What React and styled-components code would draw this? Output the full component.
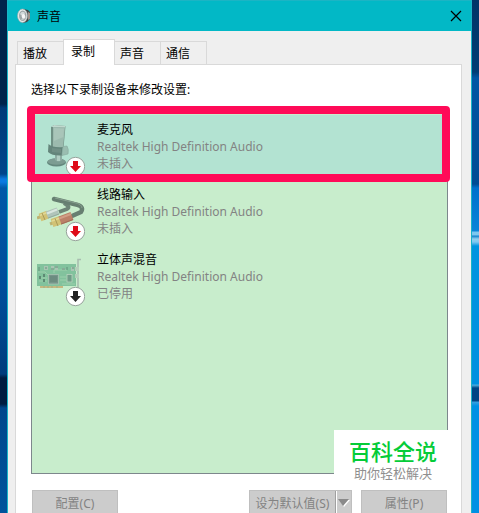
import React, { useState } from 'react'
import styled, { createGlobalStyle } from 'styled-components';

const GlobalStyle = createGlobalStyle`
    * {
        box-sizing: border-box;
    }
    body {
        margin: 0;
        overflow: hidden;
        font-family: 'Noto Sans', 'Noto Sans CJK SC', sans-serif;
        font-size: 12px;
        line-height: 17px;
        color: #000;
    }
    button {
        font: inherit;
        color: inherit;
    }
`;

const Desktop = styled.div`
    display: flex;
    height: 100vh;
    padding: 0 7px;
    overflow: hidden;
    background:
        linear-gradient(#00244c 0 104px, #003a78 108px, #00468c 174px, #0a7ae0 179px, #0a7ae0 182px, #0059a8 188px, #004c98 300px, #003c7c 374px, #001c40 378px, #001c40 404px, #00468c 408px, #00549c 100%) left / 7px 100% no-repeat,
        linear-gradient(#003468 0, #003c74 72px, #0055a4 78px, #004c94 184px, #0070cc 188px, #0a84d8 231px, #7cc8f0 232px, #7cc8f0 235px, #1080cc 236px, #90d0f0 239px, #80c8f0 242px, #0094e0 246px, #0090e0 384px, #50b0e0 385px, #004484 388px, #004484 401px, #3aa0e0 402px, #0090e4 406px, #0090e4 100%) right / 8px 100% no-repeat;
`;

const Dialog = styled.main`
    flex: 1;
    min-height: 100%;
    display: flex;
    flex-direction: column;
    border: 1px solid #18b4c8;
    border-top-color: #1cb4c4;
    border-bottom: 0;
    background: #efefef;
`;

const TitleBar = styled.header`
    display: flex;
    align-items: center;
    height: 30px;
    flex-shrink: 0;
    padding: 0 9px;
    background: #02b8c6;
`;

const Title = styled.h1`
    flex: 1;
    margin: 0 0 0 5px;
    font-size: 12px;
    font-weight: 400;
`;

const CloseButton = styled.button`
    display: flex;
    padding: 0;
    border: 0;
    background: none;
`;

const TabList = styled.div`
    display: flex;
    align-items: flex-end;
    height: 33px;
    flex-shrink: 0;
    padding: 0 9px;
`;

const Tab = styled.button`
    height: ${(props) => (props.$active ? '26px' : '23px')};
    width: ${(props) => (props.$active ? '52px' : '47px')};
    margin: ${(props) => (props.$active ? '0 0 -1px -1px' : '0 0 0 -1px')};
    padding: ${(props) => (props.$active ? '0 10px 2px 7px' : '0 5px')};
    text-align: left;
    border: 1px solid #d9d9d9;
    border-bottom: 0;
    background: ${(props) => (props.$active ? '#fff' : '#efefef')};
    z-index: ${(props) => (props.$active ? 1 : 0)};

    &:first-child {
        margin-left: 0;
    }
`;

const Page = styled.section`
    flex: 1 0 auto;
    margin: 0 9px 0 7px;
    padding: 16px 13px 0 15px;
    border: 1px solid #d9d9d9;
    background: #fff;
`;

const Hint = styled.p`
    margin: 0 0 15px;
`;

const DeviceArea = styled.div`
    position: relative;
`;

const DeviceList = styled.ul`
    height: 361px;
    margin: 0;
    padding: 1px 0 0;
    list-style: none;
    border: 1px solid #7d878c;
    background: #c8edcc;
`;

const DeviceRow = styled.li`
    position: relative;
    display: flex;
    gap: 12px;
    height: 65px;
    padding: 6px 5px;
    background: ${(props) => (props.$selected ? '#b3e3d2' : 'transparent')};
`;

const Marker = styled.span`
    position: absolute;
    inset: -9px -3px -2px -5px;
    border: 8px solid #ff0b58;
    border-radius: 4px;
    pointer-events: none;
`;

const DeviceName = styled.div`
    color: #000;
`;

const DeviceInfo = styled.div`
    color: #838383;
`;

const Watermark = styled.div`
    position: absolute;
    right: 0;
    bottom: -14px;
    width: 114px;
    height: 58px;
    padding: 10px 0 0 4px;
    text-align: center;
    font-family: 'Liberation Sans', 'Noto Sans CJK SC', sans-serif;
    background: #fff;
`;

const WatermarkTitle = styled.div`
    font-size: 22px;
    line-height: 26px;
    font-weight: 500;
    color: #05cc38;
`;

const WatermarkText = styled.div`
    font-size: 13px;
    line-height: 16px;
    color: #8f8f8f;
`;

const ButtonRow = styled.div`
    display: flex;
    gap: 9px;
    margin: 16px 0 0 1px;
    padding-right: 1px;
`;

const PushButton = styled.button`
    width: 86px;
    height: 26px;
    margin-right: ${(props) => (props.$pushRest ? 'auto' : '0')};
    padding: 0;
    border: 1px solid #bfbfbf;
    background: #ccc;
    color: #838383;
`;

const SplitButton = styled.div`
    display: flex;
    height: 26px;
    border: 1px solid #bfbfbf;
    background: #ccc;
`;

const SplitPart = styled.button`
    display: flex;
    align-items: center;
    justify-content: center;
    width: ${(props) => props.$width}px;
    padding: 0;
    border: 0;
    border-right: ${(props) => (props.$divided ? '1px solid #a0a0a0' : '0')};
    box-shadow: ${(props) => (props.$divided ? '1px 0 #fff' : 'none')};
    background: none;
    color: #838383;
`;

function SpeakerIcon() {
    return (
        <svg width="15" height="16" viewBox="0 0 15 16" aria-hidden="true">
            <path d="M6 1 L11 2 L13 4 V11 L10 14 L6 15 Z" fill="#3f4444" />
            <path d="M11 4 L13 5 V11 L11 12 Z" fill="#a0938c" />
            <ellipse cx="5.5" cy="7.8" rx="5" ry="6.8" fill="#e6eaea" stroke="#a0a8a8" strokeWidth="0.6" />
            <ellipse cx="5.7" cy="7.8" rx="3.7" ry="5.2" fill="#9da6a7" />
            <path d="M3 6 Q5 2 8 5 L6 9 Z" fill="#d3dadb" />
            <path d="M4 12 Q7 13 9 9 L6 9 Z" fill="#c3caca" />
            <ellipse cx="6.5" cy="8.2" rx="1.7" ry="2.2" fill="#f6f6f6" />
        </svg>
    )
}

function StatusBadge({ color }) {
    return (
        <g>
            <circle cx="38.5" cy="45.5" r="9.2" fill="#fff" stroke="#98a39c" strokeWidth="1" />
            <path d="M36 40 H41 V45 H44 L38.5 51 L33 45 H36 Z" fill={color} />
        </g>
    )
}

function MicrophoneArt() {
    return (
        <g>
            <ellipse cx="19.5" cy="41.5" rx="9.5" ry="4" fill="#64877d" />
            <ellipse cx="19.5" cy="40.5" rx="9" ry="3.2" fill="#7c9c92" />
            <path d="M18 34 H25 V39 Q21.500 42 18 39 Z" fill="#8eada3" />
            <path d="M20 34 H23 V40 H20 Z" fill="#b0cdc2" />
            <path d="M14 6 L17 4 L28.500 5 L26.500 27 L14 26 Z" fill="#6f9084" />
            <path d="M16 6 L28 6.500 L26 27 L16 26 Z" fill="#9cbaae" />
            <path d="M17 7 L27 7.500 L26.300 16 L17 20 Z" fill="#a9c5b9" />
            <path d="M14 6 L17 4 L28.500 5 L28 6.500 L16 6 Z" fill="#c0d9ce" />
            <path d="M11.500 23 Q16 27 26 26 L25 34.500 Q15 35 11 31 Z" fill="#64857b" />
            <path d="M15 27 L24 28 L24 32 L15 31 Z" fill="#708f85" />
            <path d="M26 25.500 L30 25 Q32 28 31 33 L25 34.500 Z" fill="#9abdb0" stroke="#86a99d" strokeWidth="0.6" />
        </g>
    )
}

function CableArt() {
    return (
        <g fill="none">
            <path d="M27 17 Q34 21 30 23 L22 26" stroke="#6d8476" strokeWidth="4" />
            <path d="M17 13 L37 18 Q48 20 44 26 L35 30" stroke="#677f71" strokeWidth="4.400" strokeLinecap="round" />
            <path d="M18 12 L37 16.500 Q45 18 45 22" stroke="#88a08f" strokeWidth="1" />
            <path d="M0 32 L4 30.500" stroke="#bdb271" strokeWidth="3" />
            <path d="M3 31.500 L11 28.500" stroke="#d1c275" strokeWidth="8" />
            <path d="M3 29.500 L10 26.500" stroke="#e2d894" strokeWidth="1.500" />
            <path d="M5 27 L8 34" stroke="#a99a58" strokeWidth="1" />
            <path d="M10 29 L21 25" stroke="#b0c4ba" strokeWidth="7.500" />
            <path d="M10 27.500 L20 23.500" stroke="#d9e6df" strokeWidth="2" />
            <path d="M11 32 L22 28" stroke="#92aa9c" strokeWidth="1" />
            <path d="M13 38 L17 36.500" stroke="#bdb271" strokeWidth="3" />
            <path d="M15 37 L24 34" stroke="#d1c275" strokeWidth="8.500" />
            <path d="M15 35 L23 32" stroke="#e2d894" strokeWidth="1.500" />
            <path d="M18 32.500 L21 40" stroke="#a99a58" strokeWidth="1" />
            <path d="M23 34.500 L35 30" stroke="#bb8068" strokeWidth="8.500" />
            <path d="M22 32.500 L34 28" stroke="#d19d85" strokeWidth="2" />
            <path d="M24 38 L36 33.500" stroke="#a06c58" strokeWidth="1" />
        </g>
    )
}

function SoundCardArt() {
    return (
        <g>
            <path d="M41 39 V8.500 H44" fill="none" stroke="#a9bdb0" strokeWidth="1.600" />
            <rect x="0" y="13" width="39" height="22" fill="#82c29d" />
            <rect x="38" y="16" width="4" height="4" fill="#b5cfba" />
            <rect x="38" y="23" width="4" height="4" fill="#b5cfba" />
            <rect x="3" y="35" width="23" height="2" fill="#c6b780" />
            <path d="M7 35 V37 M11 35 V37 M15 35 V37 M20 35 V37" stroke="#9ab285" />
            <path d="M1 21 H8 L11 24 M2 27 H10 M2 30 H10 M23 26 H29 M23 29 H29 M25 33 H38 M17 22 V19 H30" fill="none" stroke="#a4d4b0" strokeWidth="0.800" />
            <rect x="11.500" y="23.500" width="10" height="9.500" fill="#76958a" stroke="#a9c4b2" strokeWidth="0.800" />
            <path d="M13 25 H20 V31 H13 Z" fill="#6c8c80" />
            <rect x="30" y="23.500" width="5" height="7.500" fill="#719c88" stroke="#b9d4bf" strokeWidth="0.800" />
            <path d="M7 15 H11 V19 H7 Z M14 15 H17 V19 H14 Z M18 15 H21 V19 H18 Z M25 17 H28 V19 H25 Z M34 16 H37 V20 H34 Z" fill="#aac5b3" />
            <path d="M2 16 V20 M8 17 H10 M14 18 H17 M18 16 H21 M25 18 H28 M30 16 V19 M35 17 H37" stroke="#5d8a74" strokeWidth="0.900" />
            <path d="M6 23 H8 V26 H6 Z M6 28 H8 V31 H6 Z M2 25 H4 V28 H2 Z" fill="#5d8a74" />
        </g>
    )
}

const ICONS = { mic: MicrophoneArt, cable: CableArt, card: SoundCardArt };

function DeviceIcon({ type, color }) {
    const Art = ICONS[type];
    return (
        <svg width="48" height="56" viewBox="0 0 48 56" aria-hidden="true">
            <Art />
            <StatusBadge color={color} />
        </svg>
    )
}

const tabs = ['播放', '录制', '声音', '通信'];

const devices = [
    { type: 'mic', name: '麦克风', status: '未插入', color: '#de0a18' },
    { type: 'cable', name: '线路输入', status: '未插入', color: '#de0a18' },
    { type: 'card', name: '立体声混音', status: '已停用', color: '#222' },
];

function App() {
    const [activeTab, setActiveTab] = useState('录制');
    const [selected, setSelected] = useState('mic');

    return (
        <>
            <GlobalStyle />
            <Desktop>
                <Dialog>
                    <TitleBar>
                        <SpeakerIcon />
                        <Title>声音</Title>
                        <CloseButton aria-label="关闭">
                            <svg width="12" height="12" viewBox="0 0 12 12">
                                <path d="M1 1 L11 11 M11 1 L1 11" stroke="#000" strokeWidth="1.2" />
                            </svg>
                        </CloseButton>
                    </TitleBar>
                    <TabList role="tablist">
                        {tabs.map((tab) => (
                            <Tab
                                key={tab}
                                role="tab"
                                aria-selected={tab === activeTab}
                                $active={tab === activeTab}
                                onClick={() => setActiveTab(tab)}
                            >
                                {tab}
                            </Tab>
                        ))}
                    </TabList>
                    <Page>
                        <Hint id="hint">选择以下录制设备来修改设置:</Hint>
                        <DeviceArea>
                            <DeviceList role="listbox" aria-labelledby="hint">
                                {devices.map((device) => (
                                    <DeviceRow
                                        key={device.type}
                                        role="option"
                                        aria-selected={device.type === selected}
                                        $selected={device.type === selected}
                                        onClick={() => setSelected(device.type)}
                                    >
                                        <DeviceIcon type={device.type} color={device.color} />
                                        <div>
                                            <DeviceName>{device.name}</DeviceName>
                                            <DeviceInfo>Realtek High Definition Audio</DeviceInfo>
                                            <DeviceInfo>{device.status}</DeviceInfo>
                                        </div>
                                        {device.type === selected && <Marker />}
                                    </DeviceRow>
                                ))}
                            </DeviceList>
                            <Watermark>
                                <WatermarkTitle>百科全说</WatermarkTitle>
                                <WatermarkText>助你轻松解决</WatermarkText>
                            </Watermark>
                        </DeviceArea>
                        <ButtonRow>
                            <PushButton disabled $pushRest>配置(C)</PushButton>
                            <SplitButton>
                                <SplitPart disabled $divided $width={86}>设为默认值(S)</SplitPart>
                                <SplitPart disabled $width={15} aria-label="更多选项">
                                    <svg width="13" height="8" viewBox="0 0 13 8">
                                        <path d="M2 1 H13 L7 8 Z" fill="#fff" />
                                        <path d="M1 0 H12 L6 7 Z" fill="#8a8a8a" />
                                    </svg>
                                </SplitPart>
                            </SplitButton>
                            <PushButton disabled>属性(P)</PushButton>
                        </ButtonRow>
                    </Page>
                </Dialog>
            </Desktop>
        </>
    )
}

export default App
